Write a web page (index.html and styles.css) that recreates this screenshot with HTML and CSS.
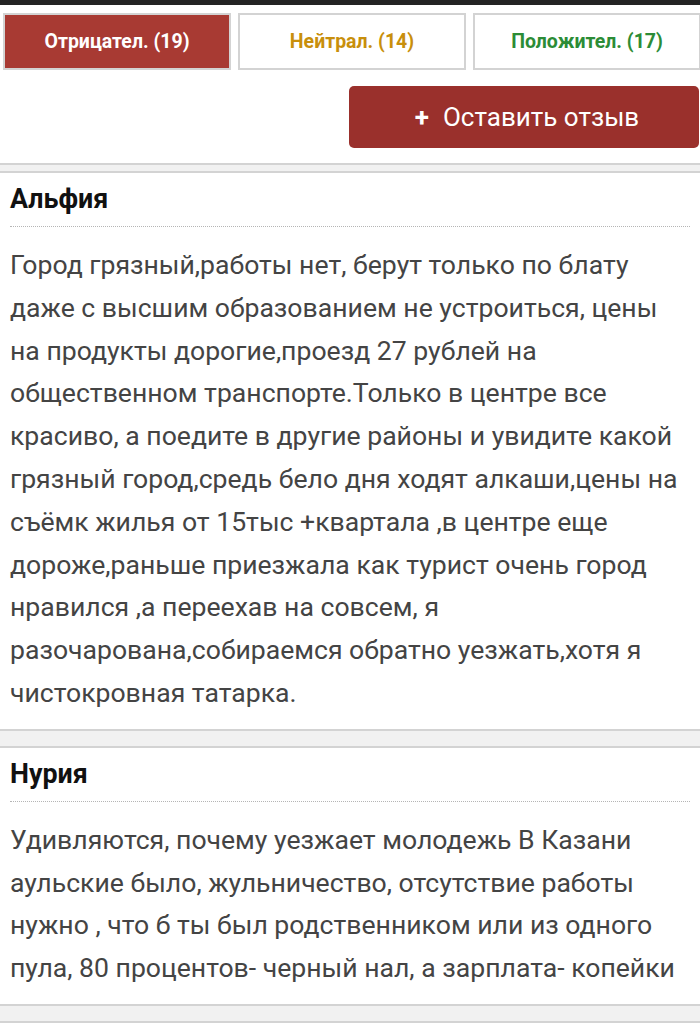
FILE: index.html
```html
<!DOCTYPE html>
<html lang="ru">
<head>
<meta charset="utf-8">
<link rel="stylesheet" href="styles.css">
</head>
<body>
<div class="topbar"></div>
<div class="tabs">
  <div class="tab tab-neg">Отрицател. (19)</div>
  <div class="tab tab-neu">Нейтрал. (14)</div>
  <div class="tab tab-pos">Положител. (17)</div>
</div>
<div class="actions">
  <button class="add-btn"><span class="plus">+</span>Оставить отзыв</button>
</div>
<div class="sep sep-top"></div>
<div class="review">
  <div class="name">Альфия</div>
  <div class="text">Город грязный,работы нет, берут только по блату даже с высшим образованием не устроиться, цены на продукты дорогие,проезд 27 рублей на общественном транспорте.Только в центре все красиво, а поедите в другие районы и увидите какой грязный город,средь бело дня ходят алкаши,цены на съёмк жилья от 15тыс +квартала ,в центре еще дороже,раньше приезжала как турист очень город нравился ,а переехав на совсем, я разочарована,собираемся обратно уезжать,хотя я чистокровная татарка.</div>
</div>
<div class="sep"></div>
<div class="review">
  <div class="name">Нурия</div>
  <div class="text">Удивляются, почему уезжает молодежь В Казани аульские было, жульничество, отсутствие работы нужно , что б ты был родственником или из одного пула, 80 процентов- черный нал, а зарплата- копейки</div>
</div>
<div class="sep"></div>
</body>
</html>
```
FILE: styles.css
```css
html, body {
  margin: 0;
  padding: 0;
  background: #fff;
  overflow-x: hidden;
}
body {
  font-family: Roboto, "Liberation Sans", sans-serif;
  width: 700px;
}
.topbar {
  height: 5px;
  background: #232323;
}
.tabs {
  display: flex;
  gap: 7px;
  padding: 8px 0 0 3px;
  width: 720px;
}
.tab {
  flex: 0 0 228px;
  box-sizing: border-box;
  height: 57px;
  border: 2px solid #d3d3d3;
  background: #fff;
  display: flex;
  align-items: center;
  justify-content: center;
  font-size: 19.5px;
  font-weight: 700;
}
.tab-neg {
  background: #a83a33;
  color: #fff;
}
.tab-neu { color: #c88f0c; }
.tab-pos { color: #2c8c36; }
.actions {
  display: flex;
  justify-content: flex-end;
  padding: 16px 1px 15px 0;
}
.add-btn {
  width: 350px;
  height: 62px;
  border: none;
  border-radius: 5px;
  background: #9a302c;
  color: #fff;
  font-family: Roboto, "Liberation Sans", sans-serif;
  font-size: 26px;
  display: flex;
  align-items: center;
  justify-content: center;
  padding: 0 0 0 6px;
}
.plus {
  font-weight: 700;
  margin-right: 14px;
  font-size: 26px;
}
.sep {
  height: 15px;
  background: #f1f1f1;
  border-top: 2px solid #d3d3d3;
  border-bottom: 2px solid #d3d3d3;
}
.sep-top {
  height: 6px;
}
.review {
  padding: 0 10px;
}
.name {
  height: 53px;
  line-height: 53px;
  font-size: 26.8px;
  font-weight: 700;
  color: #111;
  border-bottom: 1px dotted #b5b5b5;
}
.text {
  padding: 17px 0 14px;
  font-size: 26.6px;
  line-height: 42.8px;
  color: #444;
}
```
